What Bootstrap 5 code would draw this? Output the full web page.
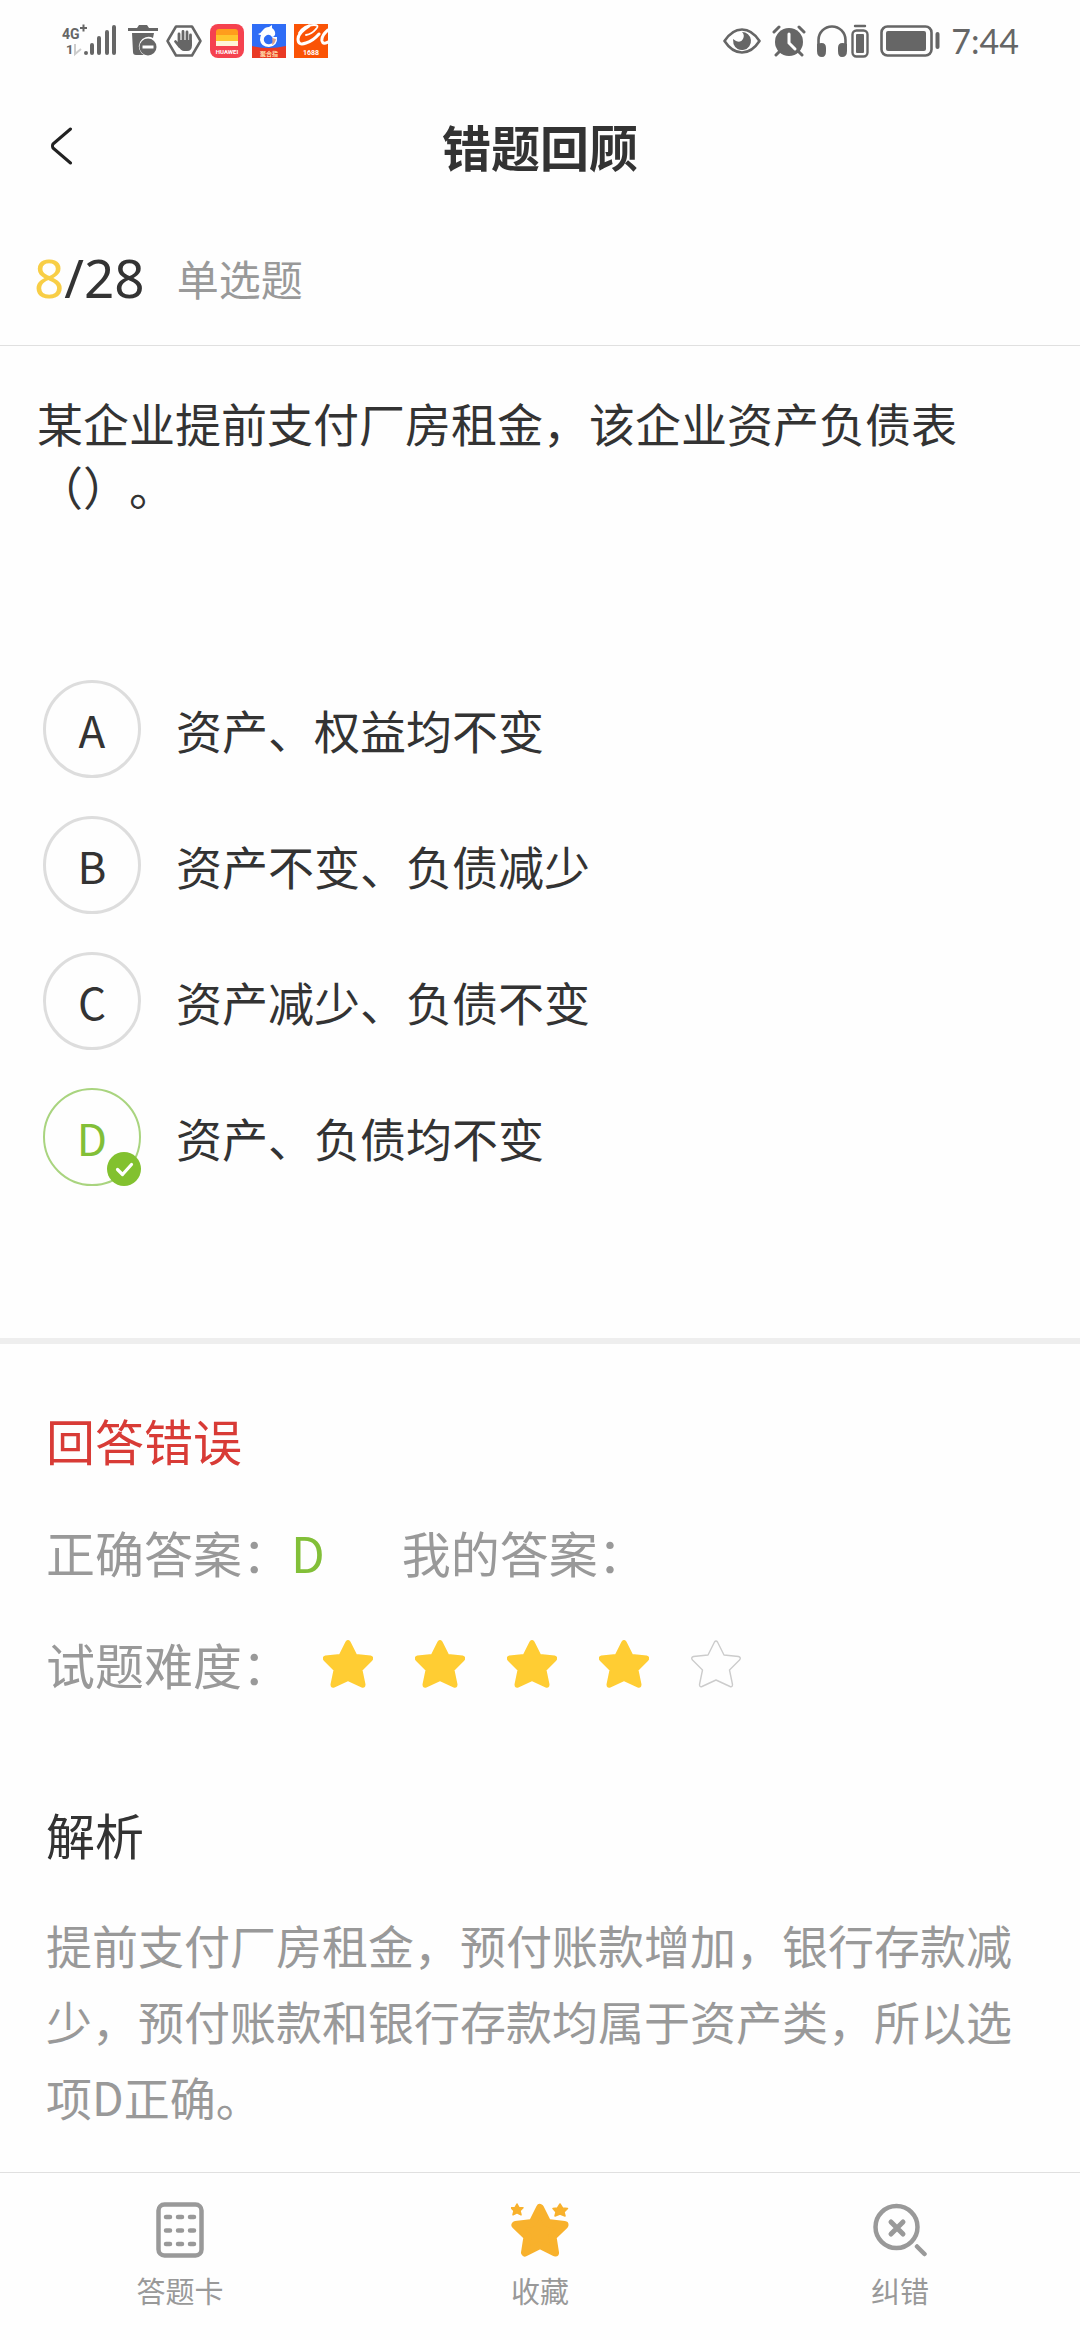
<!DOCTYPE html>
<html lang="zh-CN">
<head>
<meta charset="utf-8">
<meta name="viewport" content="width=device-width, initial-scale=1">
<title>错题回顾</title>
<link href="https://cdn.jsdelivr.net/npm/bootstrap@5.3.0/dist/css/bootstrap.min.css" rel="stylesheet">
<style>
  body { font-family: "Noto Sans CJK SC", sans-serif; color: #333; background: #fefefe; text-spacing-trim: space-all; }
  svg { display: block; flex: none; }
  .status-bar { height: 81px; padding: 0 61px; color: #666; }
  .status-left { gap: 8px; }
  .status-right { gap: 11px; }
  .clock { font: 400 34px/40px Lato, sans-serif; }
  .title-bar { height: 130px; }
  .title-bar h1 { font-size: 49px; line-height: 72px; font-weight: 700; }
  .back-btn { left: 0; top: 0; height: 130px; padding: 0 48px; color: #222; }
  .progress-row { height: 135px; padding: 0 34px; gap: 32px; border-bottom: 1px solid #e0e0e0; }
  .count { font-family: "Noto Sans", sans-serif; font-size: 53px; line-height: 72px; }
  .current { color: #f8ce46; }
  .kind { font-size: 42px; line-height: 72px; color: #999; }
  .question { padding: 45px 37px 0; font-size: 46px; line-height: 63px; }
  .options { padding: 163px 43px 152px; gap: 38px; border-bottom: 6px solid #eee; }
  .option { gap: 35px; font-size: 46px; line-height: 70px; }
  .letter { width: 98px; height: 98px; flex: none; border: 3px solid #ddd; border-radius: 50%; font-size: 44px; }
  .btn-check:checked + .option .letter { border: 2px solid #a9d47f; color: #82bf38; }
  .tick { right: -2px; bottom: -2px; }
  .result { padding: 60px 46px 34px; font-size: 49px; line-height: 72px; }
  .facts { gap: 40px; color: #999; }
  .wrong { color: #d83b36; }
  .right-answer { color: #82bf38; }
  .mine { margin-left: 77px; }
  .stars { margin-left: 32px; gap: 42px; }
  .analysis h2 { font-size: 49px; line-height: 72px; margin: 98px 0 36px; font-weight: 400; }
  .analysis p { font-size: 46px; line-height: 76px; color: #999; }
  .tab-bar { border-top: 1px solid #e0e0e0; background: #fefefe; }
  .tab-btn { gap: 12px; padding: 29px 0 30px; color: #999; font-size: 29px; line-height: 40px; }
</style>
</head>
<body>
<div class="d-flex flex-column min-vh-100">
  <div class="status-bar d-flex justify-content-between align-items-center">
    <div class="status-left d-flex align-items-center">
      <svg width="59" height="34" viewBox="0 0 59 34" fill="#666" font-family="Roboto, sans-serif" font-weight="700">
        <text x="1" y="15" font-size="14">4G</text><path d="M19 4h7M22.500 0.500v7" stroke="#666" stroke-width="2"/>
        <text x="5" y="30" font-size="13">1</text><path d="M14 20v10l6-5" fill="none" stroke="#ccc" stroke-width="2"/>
        <g stroke="#666" stroke-width="4" stroke-linecap="round"><path d="M25 29v0M31 21v8M38 14v15M46 8v21M53 3v26"/></g>
      </svg>
      <svg width="30" height="34" viewBox="0 0 30 34" fill="#666">
        <path d="M0 4h9l2-3h8l2 3h9v3H0zM4 9h22l-1 5a9 9 0 0 0-9 17H8a3 3 0 0 1-3-3z"/>
        <circle cx="20" cy="23" r="8.500"/><path d="M14.500 21.500h11v3h-11z" fill="#fff"/>
      </svg>
      <svg width="36" height="34" viewBox="0 0 36 34">
        <path d="M10 2.500h16l8.500 14.500-8.500 14.500H10L1.500 17z" fill="none" stroke="#666" stroke-width="2.500" stroke-linejoin="round"/>
        <path d="M13 10v9M17 7.500v11M21 8v11M24.500 11v10M9.500 17.500l4 5" stroke="#666" stroke-width="2.800" stroke-linecap="round"/>
        <path d="M12 16h14v5q0 6-5 6h-3q-3 0-6-5z" fill="#666"/>
      </svg>
      <svg width="34" height="34" viewBox="0 0 34 34">
        <rect width="34" height="34" rx="8" fill="#f5424f"/>
        <path d="M6 11V8q0-3 3-3h16q3 0 3 3v3z" fill="#ff9d1c"/><path d="M6 11h22v6H6z" fill="#ffc52c"/><path d="M6 17h22v5H6z" fill="#fff5d8"/>
        <text x="17" y="29.500" text-anchor="middle" font-size="6" font-weight="700" font-family="Roboto, sans-serif" fill="#fff">HUAWEI</text>
      </svg>
      <svg width="34" height="34" viewBox="0 0 34 34">
        <path d="M0 0h34v34H0z" fill="#2f6df6"/>
        <path d="M6 10q3-1 5-4 2-3 6-3l3-2v3q4 3 3 7-1 2-3 2-2-3-5-2-4 2-3 6 2 4 6 3 4-1 4-4l-2-3 5 0q1 9-8 10-8 0-9-7 0-3 1-5-2 0-3-1z" fill="#fff"/>
        <path d="M20 14l4 1q-1 5-4 6 1-4 0-7z" fill="#d8a090"/>
        <path d="M0 22q17 4 34 0v12H0z" fill="#e93a24"/>
        <text x="17" y="31.500" text-anchor="middle" font-size="6" font-weight="700" fill="#ffe0b0">聚合指</text>
      </svg>
      <svg width="34" height="34" viewBox="0 0 34 34">
        <path d="M0 0h34v34H0z" fill="#fa5305"/>
        <g fill="none" stroke="#fff" stroke-linecap="round"><path d="M5 9Q10 1 20 1Q26 1 22 5Q18 10 12 11" stroke-width="1.800"/><path d="M15 2Q4 9 4 15Q4 22 12 19Q19 17 25 10" stroke-width="3"/><path d="M34 6Q27 12 28 17Q29 21 34 18" stroke-width="3"/></g>
        <text x="17" y="30.500" text-anchor="middle" font-size="7" font-weight="700" font-family="Roboto, sans-serif" fill="#fff">1688</text>
      </svg>
    </div>
    <div class="status-right d-flex align-items-center">
      <svg width="38" height="26" viewBox="0 0 38 26">
        <path d="M1.500 13Q9 1.500 19 1.500T36.500 13Q29 24.500 19 24.500T1.500 13z" fill="none" stroke="#666" stroke-width="2.600" stroke-linejoin="round"/>
        <path d="M19 4a9 9 0 1 1-8.500 12L10 11l3 2q5 2 7-2t-1-7z" fill="#666"/>
      </svg>
      <svg width="34" height="34" viewBox="0 0 34 34">
        <circle cx="17" cy="18" r="14" fill="#666"/><path d="M2 8l5-5M32 8l-5-5M4 31l5-5M30 31l-5-5" stroke="#666" stroke-width="3" stroke-linecap="round"/>
        <path d="M17 10v9l6 6" fill="none" stroke="#fff" stroke-width="3" stroke-linecap="round"/>
      </svg>
      <svg width="52" height="34" viewBox="0 0 52 34">
        <path d="M1.500 27V16a13 13 0 0 1 27 0v11" fill="none" stroke="#666" stroke-width="2.600"/>
        <path d="M0 20q9-3 9 4v3q0 6-4 6-5 0-5-6zM30 20q-9-3-9 4v3q0 6 4 6 5 0 5-6z" fill="#666"/>
        <path d="M38 2h10" stroke="#666" stroke-width="2.400" stroke-linecap="round"/><rect x="35.500" y="6.500" width="15" height="26" rx="4" fill="none" stroke="#666" stroke-width="2.400"/><rect x="39" y="10" width="8" height="19" rx="1" fill="#666"/>
      </svg>
      <svg width="60" height="34" viewBox="0 0 60 34">
        <rect x="1.500" y="2.500" width="50" height="29" rx="6" fill="none" stroke="#666" stroke-width="2.600"/><rect x="6" y="7" width="40" height="20" rx="2" fill="#666"/><path d="M57.500 10v13" stroke="#666" stroke-width="4" stroke-linecap="round"/>
      </svg>
      <span class="clock">7:44</span>
    </div>
  </div>

  <header class="title-bar position-relative d-flex align-items-center justify-content-center">
    <button type="button" class="back-btn btn border-0 position-absolute" aria-label="返回">
      <svg width="26" height="38" viewBox="0 0 26 38" fill="none" stroke="currentColor" stroke-width="3" stroke-linecap="round" stroke-linejoin="round"><path d="M22.500 2L5 17q-1 2 0 4l17.500 15"/></svg>
    </button>
    <h1 class="m-0">错题回顾</h1>
  </header>

  <div class="progress-row d-flex align-items-center">
    <div class="count"><span class="current">8</span>/28</div>
    <div class="kind">单选题</div>
  </div>

  <main class="flex-grow-1">
    <p class="question m-0">某企业提前支付厂房租金，该企业资产负债表（）。</p>
    <div class="options d-flex flex-column">
      <div>
        <input class="btn-check" type="radio" name="answer" id="optA">
        <label class="option d-flex align-items-center" for="optA"><span class="letter d-flex align-items-center justify-content-center">A</span><span>资产、权益均不变</span></label>
      </div>
      <div>
        <input class="btn-check" type="radio" name="answer" id="optB">
        <label class="option d-flex align-items-center" for="optB"><span class="letter d-flex align-items-center justify-content-center">B</span><span>资产不变、负债减少</span></label>
      </div>
      <div>
        <input class="btn-check" type="radio" name="answer" id="optC">
        <label class="option d-flex align-items-center" for="optC"><span class="letter d-flex align-items-center justify-content-center">C</span><span>资产减少、负债不变</span></label>
      </div>
      <div>
        <input class="btn-check" type="radio" name="answer" id="optD" checked>
        <label class="option d-flex align-items-center" for="optD"><span class="letter position-relative d-flex align-items-center justify-content-center">D<svg class="tick position-absolute" width="34" height="34" viewBox="0 0 34 34"><circle cx="17" cy="17" r="17" fill="#82c12f"/><path d="M10.500 17.500l5 5 9-10" fill="none" stroke="#fff" stroke-width="3.200" stroke-linecap="round" stroke-linejoin="round"/></svg></span><span>资产、负债均不变</span></label>
      </div>
    </div>

    <section class="result">
      <div class="facts d-flex flex-column">
        <div class="wrong">回答错误</div>
        <div class="d-flex"><span>正确答案：</span><span class="right-answer">D</span><span class="mine">我的答案：</span></div>
        <div class="d-flex align-items-center"><span>试题难度：</span>
          <div class="stars d-flex" role="img" aria-label="难度 4 星">
            <svg width="50" height="48" viewBox="0 0 50 48"><use href="#star" fill="#ffcd33" stroke="#ffcd33" stroke-width="2"/></svg>
            <svg width="50" height="48" viewBox="0 0 50 48"><use href="#star" fill="#ffcd33" stroke="#ffcd33" stroke-width="2"/></svg>
            <svg width="50" height="48" viewBox="0 0 50 48"><use href="#star" fill="#ffcd33" stroke="#ffcd33" stroke-width="2"/></svg>
            <svg width="50" height="48" viewBox="0 0 50 48"><use href="#star" fill="#ffcd33" stroke="#ffcd33" stroke-width="2"/></svg>
            <svg width="50" height="48" viewBox="0 0 50 48"><defs><path id="star" stroke-linejoin="round" d="M23.500 2Q25 0 26.500 2L33 15l14.500 1.500q3 1 1 3.500L38.500 30l3 14.500q0 3-2.500 2L25 40 11 46.500q-2.500 1-2.500-2l3-14.500L1.500 20q-2-2.500 1-3.500L17 15z"/></defs><use href="#star" fill="none" stroke="#ccc" stroke-width="1.400"/></svg>
          </div>
        </div>
      </div>
      <div class="analysis">
        <h2>解析</h2>
        <p class="m-0">提前支付厂房租金，预付账款增加，银行存款减少，预付账款和银行存款均属于资产类，所以选项D正确。</p>
      </div>
    </section>
  </main>

  <nav class="tab-bar sticky-bottom">
    <div class="row g-0">
      <div class="col"><button type="button" class="tab-btn btn border-0 w-100 d-flex flex-column align-items-center">
        <svg width="48" height="56" viewBox="0 0 48 56" fill="none" stroke="#999"><rect x="2.500" y="2.500" width="43" height="51" rx="6" stroke-width="4.500"/><path d="M10 15h4M22 15h4M34 15h4M10 28.500h4M22 28.500h4M34 28.500h4M10 42h4M22 42h4M34 42h4" stroke-width="4.500" stroke-linecap="round"/></svg>
        <span>答题卡</span></button></div>
      <div class="col"><button type="button" class="tab-btn btn border-0 w-100 d-flex flex-column align-items-center">
        <svg width="58" height="56" viewBox="0 0 58 56" fill="#f8b12c" stroke="#f8b12c" stroke-linejoin="round"><path stroke-width="8" d="M29 6l7.500 15L53.500 23 41.500 34.500 44 50.500 29 43 14 50.500 16.500 34.500 4.500 23 21.500 21z"/><path stroke-width="1.500" d="M6 2l2 3.500 4 .300-3 3 1 4-4-2-4 2 1-4-3-3 4-.300zM49 2l2.500 4 5 .500-3.500 3.500 1 4-5-2-5 2 1-4-3-3.500 4.500-.500z"/></svg>
        <span>收藏</span></button></div>
      <div class="col"><button type="button" class="tab-btn btn border-0 w-100 d-flex flex-column align-items-center">
        <svg width="54" height="56" viewBox="0 0 54 56" fill="none" stroke="#999" stroke-linecap="round"><circle cx="23.500" cy="25" r="21" stroke-width="4.500"/><path d="M18 20l12 12M30 20L18 32" stroke-width="5"/><path d="M44 44.500l7.500 7.500" stroke-width="4.500"/></svg>
        <span>纠错</span></button></div>
    </div>
  </nav>
</div>
<script src="https://cdn.jsdelivr.net/npm/bootstrap@5.3.0/dist/js/bootstrap.bundle.min.js"></script>
</body>
</html>
